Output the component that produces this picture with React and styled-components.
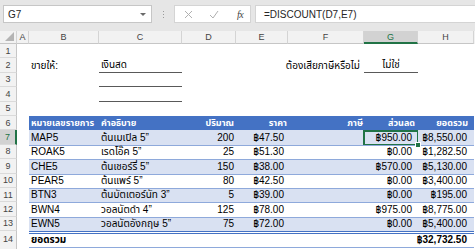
import React from "react";
import styled, { createGlobalStyle, css } from "styled-components";

const GlobalStyle = createGlobalStyle`
  html, body {
    margin: 0;
    padding: 0;
    background: #ffffff;
  }
  body {
    font-family: "Liberation Sans", "Noto Sans Thai", "Noto Sans", sans-serif;
    color: #000;
  }
`;

const COLS = "17px 12px 70px 83px 54px 52px 76px 54px 56px";
const ROW_H = 14.4;

const Page = styled.div`
  width: 475px;
  height: 249px;
  overflow: hidden;
  background: #ffffff;
`;

/* ---------- formula bar ---------- */

const FormulaBar = styled.div`
  display: flex;
  align-items: flex-start;
  height: 31px;
  box-sizing: border-box;
  padding: 5px 0 0 3px;
  background: #e6e6e6;
`;

const NameBox = styled.div`
  width: 149px;
  height: 18px;
  box-sizing: border-box;
  display: flex;
  align-items: center;
  justify-content: space-between;
  padding: 0 5px 0 4px;
  background: #ffffff;
  border: 1px solid #c6c6c6;
  font-size: 10px;
  color: #262626;
`;

const Caret = styled.span`
  width: 0;
  height: 0;
  border-left: 3px solid transparent;
  border-right: 3px solid transparent;
  border-top: 3px solid #6a6a6a;
`;

const Grip = styled.div`
  width: 22px;
  height: 18px;
  display: flex;
  flex-direction: column;
  align-items: center;
  justify-content: center;
  gap: 2px;

  span {
    width: 1px;
    height: 1px;
    background: #9a9a9a;
  }
`;

const FxButtons = styled.div`
  width: 77px;
  height: 18px;
  box-sizing: border-box;
  display: grid;
  grid-template-columns: 26px 26px 26px;
  align-items: center;
  justify-items: center;
  background: #ffffff;
  border: 1px solid #d4d4d4;
`;

const Fx = styled.span`
  font-family: "Liberation Serif", serif;
  font-style: italic;
  font-size: 10px;
  color: #444;
  letter-spacing: -0.5px;
`;

const FormulaInput = styled.div`
  flex: 1;
  height: 18px;
  margin-left: 4px;
  box-sizing: border-box;
  display: flex;
  align-items: center;
  padding-left: 8px;
  background: #ffffff;
  border: 1px solid #d4d4d4;
  border-right: none;
  font-size: 10px;
  color: #262626;
`;

/* ---------- sheet ---------- */

const Sheet = styled.div`
  display: flex;
  flex-direction: column;
`;

const HeaderRow = styled.div`
  display: grid;
  grid-template-columns: ${COLS};
  height: 13px;
  background: #f2f2f2;
`;

const Corner = styled.div`
  position: relative;
  box-sizing: border-box;
  border-right: 1px solid #d4d4d4;
  border-bottom: 1px solid #c6c6c6;

  svg {
    position: absolute;
    right: 2px;
    bottom: 2px;
  }
`;

const ColHeader = styled.div`
  box-sizing: border-box;
  display: flex;
  align-items: center;
  justify-content: center;
  font-size: 9px;
  color: #444;
  border-right: 1px solid #d4d4d4;
  border-bottom: 1px solid #c6c6c6;
  ${(p) =>
    p.$active &&
    css`
      background: #d2d2d2;
      color: #217346;
      border-bottom: 2px solid #217346;
    `}
`;

const Row = styled.div`
  display: grid;
  grid-template-columns: ${COLS};
  height: ${ROW_H}px;
`;

const RowHeader = styled.div`
  box-sizing: border-box;
  display: flex;
  align-items: center;
  justify-content: center;
  font-size: 9px;
  color: #444;
  background: #f2f2f2;
  border-right: 1px solid #c6c6c6;
  border-bottom: 1px solid #dadada;
  ${(p) =>
    p.$active &&
    css`
      background: #d2d2d2;
      color: #217346;
      border-right: 2px solid #217346;
    `}
`;

const alignMap = { left: "flex-start", right: "flex-end", center: "center" };

const Cell = styled.div`
  position: relative;
  box-sizing: border-box;
  display: flex;
  align-items: flex-end;
  justify-content: ${(p) => alignMap[p.$align || "left"]};
  padding: 0 ${(p) => p.$pr ?? 2}px 1px ${(p) => p.$pl ?? 2}px;
  font-size: ${(p) => (p.$head ? 9 : 10)}px;
  line-height: 12px;
  white-space: nowrap;
  background: ${(p) => p.$fill || "transparent"};
  color: ${(p) => (p.$head ? "#ffffff" : "#000000")};
  font-weight: ${(p) => (p.$bold || p.$head ? 700 : 400)};
  ${(p) => p.$line && css`box-shadow: inset 0 1px 0 #8ea9db;`}
  ${(p) => p.$under && css`border-bottom: 1px solid #595959;`}
  ${(p) =>
    p.$total &&
    css`
      border-top: 3px double #4472c4;
      border-bottom: 1px solid #8ea9db;
    `}
  ${(p) =>
    p.$selected &&
    css`
      &::after {
        content: "";
        position: absolute;
        left: -1px;
        top: 0;
        right: -1px;
        bottom: -1px;
        border: 2px solid #217346;
        pointer-events: none;
      }
      &::before {
        content: "";
        position: absolute;
        right: -3px;
        bottom: -3px;
        width: 4px;
        height: 4px;
        background: #217346;
        border: 1px solid #ffffff;
        z-index: 2;
      }
    `}
`;

const colLetters = ["A", "B", "C", "D", "E", "F", "G", "H"];

const items = [
  ["MAP5", "ต้นเมเปิล 5”", "200", "฿47.50", "", "฿950.00", "฿8,550.00"],
  ["ROAK5", "เรดโอ๊ค 5”", "25", "฿51.30", "", "฿0.00", "฿1,282.50"],
  ["CHE5", "ต้นเชอร์รี่ 5”", "150", "฿38.00", "", "฿570.00", "฿5,130.00"],
  ["PEAR5", "ต้นแพร์ 5”", "80", "฿42.50", "", "฿0.00", "฿3,400.00"],
  ["BTN3", "ต้นบัตเตอร์นัท 3”", "5", "฿39.00", "", "฿0.00", "฿195.00"],
  ["BWN4", "วอลนัตดำ 4”", "125", "฿78.00", "", "฿975.00", "฿8,775.00"],
  ["EWN5", "วอลนัตอังกฤษ 5”", "75", "฿72.00", "", "฿0.00", "฿5,400.00"],
];

function CornerTriangle() {
  return (
    <svg width="9" height="9" viewBox="0 0 9 9">
      <polygon points="9,0 9,9 0,9" fill="#b4b4b4" />
    </svg>
  );
}

function XIcon() {
  return (
    <svg width="9" height="9" viewBox="0 0 9 9">
      <path d="M1 1 L8 8 M8 1 L1 8" stroke="#b0b0b0" strokeWidth="1" fill="none" />
    </svg>
  );
}

function CheckIcon() {
  return (
    <svg width="10" height="9" viewBox="0 0 10 9">
      <path d="M1 5 L4 8 L9 1" stroke="#b0b0b0" strokeWidth="1" fill="none" />
    </svg>
  );
}

function Empty({ n }) {
  return Array.from({ length: n }, (_, i) => <Cell key={"e" + i} />);
}

export default function App() {
  return (
    <Page>
      <GlobalStyle />
      <FormulaBar>
        <NameBox>
          G7
          <Caret />
        </NameBox>
        <Grip>
          <span />
          <span />
          <span />
        </Grip>
        <FxButtons>
          <XIcon />
          <CheckIcon />
          <Fx>fx</Fx>
        </FxButtons>
        <FormulaInput>=DISCOUNT(D7,E7)</FormulaInput>
      </FormulaBar>

      <Sheet>
        <HeaderRow>
          <Corner>
            <CornerTriangle />
          </Corner>
          {colLetters.map((c) => (
            <ColHeader key={c} $active={c === "G"}>
              {c}
            </ColHeader>
          ))}
        </HeaderRow>

        <Row>
          <RowHeader>1</RowHeader>
          <Empty n={8} />
        </Row>

        <Row>
          <RowHeader>2</RowHeader>
          <Cell />
          <Cell>ขายให้:</Cell>
          <Cell $under>เงินสด</Cell>
          <Cell />
          <Cell />
          <Cell $align="right" $pr={4}>
            ต้องเสียภาษีหรือไม่
          </Cell>
          <Cell $under $align="center">
            ไม่ใช่
          </Cell>
          <Cell />
        </Row>

        <Row>
          <RowHeader>3</RowHeader>
          <Cell />
          <Cell />
          <Cell $under />
          <Empty n={5} />
        </Row>

        <Row>
          <RowHeader>4</RowHeader>
          <Cell />
          <Cell />
          <Cell $under />
          <Empty n={5} />
        </Row>

        <Row>
          <RowHeader>5</RowHeader>
          <Empty n={8} />
        </Row>

        <Row>
          <RowHeader>6</RowHeader>
          <Cell />
          <Cell $fill="#4472c4" $head>
            หมายเลขรายการ
          </Cell>
          <Cell $fill="#4472c4" $head>
            คำอธิบาย
          </Cell>
          <Cell $fill="#4472c4" $head $align="right">
            ปริมาณ
          </Cell>
          <Cell $fill="#4472c4" $head $align="right" $pr={1}>
            ราคา
          </Cell>
          <Cell $fill="#4472c4" $head $align="right" $pr={1}>
            ภาษี
          </Cell>
          <Cell $fill="#4472c4" $head $align="right" $pr={3}>
            ส่วนลด
          </Cell>
          <Cell $fill="#4472c4" $head $align="right" $pr={6}>
            ยอดรวม
          </Cell>
        </Row>

        {items.map((it, i) => {
          const rowNum = 7 + i;
          const fill = i % 2 === 0 ? "#d9e1f2" : "#ffffff";
          return (
            <Row key={it[0]}>
              <RowHeader $active={rowNum === 7}>{rowNum}</RowHeader>
              <Cell />
              <Cell $fill={fill} $line={i > 0}>
                {it[0]}
              </Cell>
              <Cell $fill={fill} $line={i > 0}>
                {it[1]}
              </Cell>
              <Cell $fill={fill} $line={i > 0} $align="right">
                {it[2]}
              </Cell>
              <Cell $fill={fill} $line={i > 0} $align="right" $pr={4}>
                {it[3]}
              </Cell>
              <Cell $fill={fill} $line={i > 0} $align="right">
                {it[4]}
              </Cell>
              <Cell $fill={fill} $line={i > 0} $align="right" $pr={6} $selected={rowNum === 7}>
                {it[5]}
              </Cell>
              <Cell $fill={fill} $line={i > 0} $align="right" $pr={7}>
                {it[6]}
              </Cell>
            </Row>
          );
        })}

        <Row>
          <RowHeader>14</RowHeader>
          <Cell />
          <Cell $total $bold>
            ยอดรวม
          </Cell>
          <Cell $total />
          <Cell $total />
          <Cell $total />
          <Cell $total />
          <Cell $total />
          <Cell $total $bold $align="right" $pr={7}>
            ฿32,732.50
          </Cell>
        </Row>

        <Row>
          <RowHeader />
          <Empty n={8} />
        </Row>
      </Sheet>
    </Page>
  );
}
